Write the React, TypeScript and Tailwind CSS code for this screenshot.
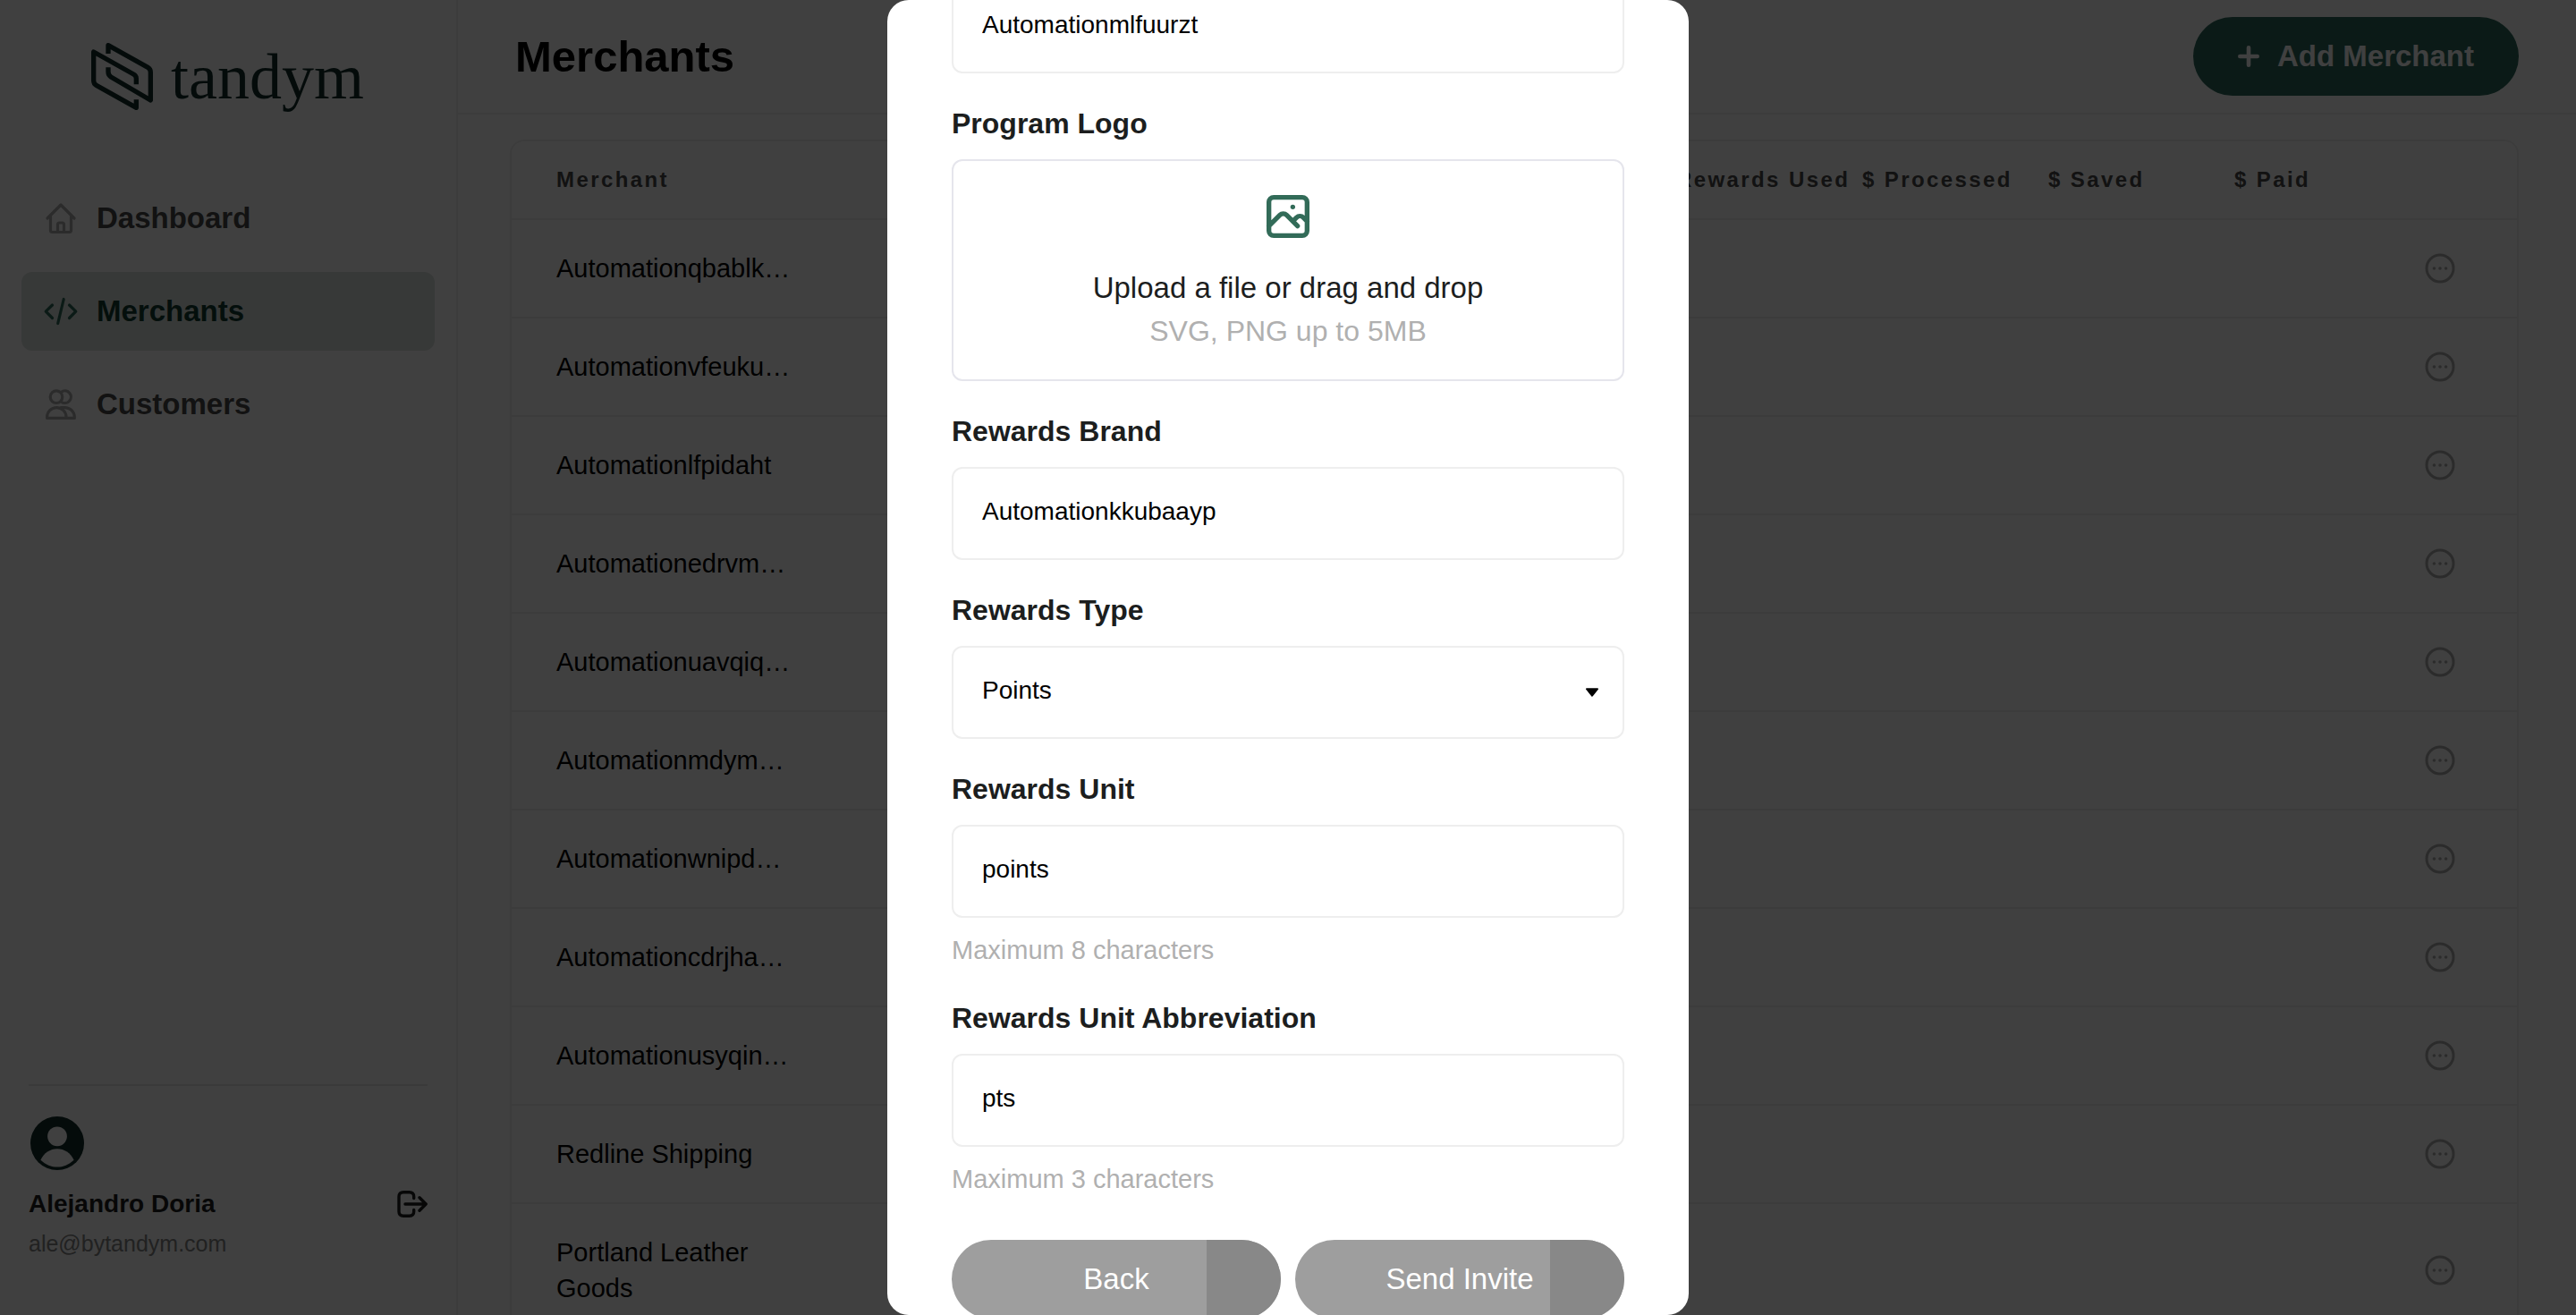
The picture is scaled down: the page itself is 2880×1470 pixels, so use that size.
import { useLayoutEffect, useRef } from "react";
import type { ReactNode } from "react";

const merchants = [
  "Automationqbablk…",
  "Automationvfeuku…",
  "Automationlfpidaht",
  "Automationedrvm…",
  "Automationuavqiq…",
  "Automationmdym…",
  "Automationwnipd…",
  "Automationcdrjha…",
  "Automationusyqin…",
  "Redline Shipping",
  "Portland Leather Goods",
];

function LineIcon({ children, className }: { children: ReactNode; className: string }) {
  return (
    <svg
      viewBox="0 0 40 40"
      className={className}
      fill="none"
      stroke="currentColor"
      strokeWidth={3.2}
      strokeLinecap="round"
      strokeLinejoin="round"
      aria-hidden="true"
    >
      {children}
    </svg>
  );
}

function Logo() {
  return (
    <div className="flex h-20 items-start gap-5 pl-[102px] text-[#112d2a]">
      <svg
        viewBox="0 0 207 225"
        className="h-[75px] w-[69px]"
        fill="none"
        stroke="currentColor"
        strokeWidth={16}
        strokeLinejoin="round"
        aria-hidden="true"
      >
        <path d="M151 139V119Q151 110 142 105L8 30V126Q8 137 17 142L151 217V190" />
        <path d="M57 82V97Q57 108 66 114L199 192V98Q199 87 190 82L57 8V36" />
      </svg>
      <span className="font-['Liberation_Serif',serif] text-[72px] leading-[76px]">tandym</span>
    </div>
  );
}

function NavItem({ label, active, children }: { label: string; active?: boolean; children: ReactNode }) {
  return (
    <a
      href="#"
      className={
        active
          ? "flex h-22 items-center gap-5 rounded-xl bg-[#dae1de] px-6 text-[33px] font-bold text-[#103c31]"
          : "flex h-22 items-center gap-5 rounded-xl px-6 text-[33px] font-bold text-[#484848]"
      }
    >
      <LineIcon className={active ? "size-10 text-[#2d6a58]" : "size-10 text-[#acacac]"}>{children}</LineIcon>
      {label}
    </a>
  );
}

function Sidebar() {
  return (
    <aside className="flex w-128 shrink-0 flex-col justify-between border-r-2 border-[#f0f0f0]">
      <div className="pt-12">
        <Logo />
        <nav className="mt-[72px] flex flex-col gap-4 px-6">
          <NavItem label="Dashboard">
            <path d="M5 20L20 5L35 20" />
            <path d="M8.5 17V33.5Q8.5 35.5 10.5 35.5H29.5Q31.5 35.5 31.5 33.5V17" />
            <path d="M16.5 35V27Q16.5 25 18.5 25H21.5Q23.5 25 23.5 27V35" />
          </NavItem>
          <NavItem label="Merchants" active>
            <path d="M10.5 13L3.2 20.2L10.5 27.5" />
            <path d="M23.2 6.5L16.7 33.5" />
            <path d="M29.5 13L36.8 20.2L29.5 27.5" />
          </NavItem>
          <NavItem label="Customers">
            <circle cx="15" cy="11.7" r="6.8" />
            <path d="M20.5 6.2A6.8 6.8 0 1 1 20.5 17.2" />
            <path d="M4.6 35.4V34.3A10.7 10.7 0 0 1 26 34.3V35.4Z" />
            <path d="M20 23.6H24.5A10.8 10.8 0 0 1 35.3 34.3V35.4H26" />
          </NavItem>
        </nav>
      </div>
      <div className="mx-8 border-t-2 border-[#e8e8e8] pt-8 pb-16">
        <svg viewBox="0 0 64 64" className="size-16" aria-hidden="true">
          <circle cx="32" cy="32" r="30" fill="#112d2a" />
          <circle cx="32" cy="24.3" r="10.9" fill="#fff" />
          <path
            fill="#fff"
            d="M13.4 50.7C17 43 24 38.3 32 38.3S47 43 50.6 50.7C45 56 38.5 58.6 32 58.6S19 56 13.4 50.7Z"
          />
        </svg>
        <div className="mt-4 flex h-10 items-center justify-between">
          <span className="text-[28px] font-bold text-[#1c1e1e]">Alejandro Doria</span>
          <button type="button" aria-label="Log out" className="text-[#1c1e1e]">
            <svg
              viewBox="0 0 36 36"
              className="size-9"
              fill="none"
              stroke="currentColor"
              strokeWidth={3.4}
              strokeLinecap="round"
              strokeLinejoin="round"
            >
              <path d="M20.7 11.5V9.7Q20.7 4.7 15.7 4.7H9Q4 4.7 4 9.7V26.3Q4 31.3 9 31.3H15.7Q20.7 31.3 20.7 26.3V24.5" />
              <path d="M11 18H34M27 10.8L34.2 18L27 25.2" />
            </svg>
          </button>
        </div>
        <p className="mt-2 text-[25px] leading-8 text-[#858585]">ale@bytandym.com</p>
      </div>
    </aside>
  );
}

function MerchantTable() {
  return (
    <div className="overflow-hidden rounded-2xl border-2 border-[#f0f0f0]">
      <table className="w-full table-fixed border-separate border-spacing-0 text-left">
        <thead>
          <tr className="h-22 text-2xl tracking-widest text-[#484848] *:border-b-2 *:border-[#f0f0f0] *:font-bold">
            <th className="pl-[50px]">Merchant</th>
            <th className="w-52 whitespace-nowrap">Rewards Used</th>
            <th className="w-52 whitespace-nowrap">$ Processed</th>
            <th className="w-52 whitespace-nowrap">$ Saved</th>
            <th className="w-[316px] whitespace-nowrap">$ Paid</th>
          </tr>
        </thead>
        <tbody>
          {merchants.map((name) => (
            <tr key={name} className="*:border-b-2 *:border-[#f0f0f0]">
              <td colSpan={4} className="py-[34px] pl-[50px] text-[29px] leading-10 text-black">
                <div className="max-w-72">{name}</div>
              </td>
              <td className="pr-[66px]">
                <button type="button" aria-label={`Actions for ${name}`} className="ml-auto block text-[#acacac]">
                  <svg viewBox="0 0 40 40" className="size-10" fill="currentColor">
                    <circle cx="20" cy="20" r="15" fill="none" stroke="currentColor" strokeWidth={3} />
                    <circle cx="13.4" cy="20" r="1.8" />
                    <circle cx="20" cy="20" r="1.8" />
                    <circle cx="26.6" cy="20" r="1.8" />
                  </svg>
                </button>
              </td>
            </tr>
          ))}
        </tbody>
      </table>
    </div>
  );
}

const inputClass =
  "h-26 w-full appearance-none rounded-xl border-2 border-[#eeeeee] bg-white px-8 pb-1 text-[28px] text-black";

function Field({ id, label, hint, children }: { id: string; label: string; hint?: string; children: ReactNode }) {
  return (
    <div className="flex flex-col">
      <label htmlFor={id} className="mb-5 text-[32px] leading-10 font-bold text-[#1c1e1e]">
        {label}
      </label>
      {children}
      {hint && <p className="mt-4 text-[29px] leading-10 text-[#b0b0b0]">{hint}</p>}
    </div>
  );
}

function ProgressButton({ label }: { label: string }) {
  return (
    <button
      type="button"
      className="relative h-22 flex-1 overflow-hidden rounded-full bg-[#9e9e9e] text-[33px] text-white"
    >
      <span className="absolute inset-y-0 right-0 w-[83px] bg-[#888888]" />
      {label}
    </button>
  );
}

function InviteDialog() {
  const scroller = useRef<HTMLDivElement>(null);

  // The form opens scrolled past the top of the program name field.
  useLayoutEffect(() => {
    if (scroller.current) scroller.current.scrollTop = 58;
  }, []);

  return (
    <div className="fixed inset-0 flex justify-center bg-black/75">
      <div
        ref={scroller}
        role="dialog"
        aria-modal="true"
        className="h-full w-4xl overflow-y-auto rounded-3xl bg-white [scrollbar-width:none]"
      >
        <form className="flex flex-col gap-9 px-18 pt-9 pb-18">
          <input aria-label="Program Name" className={inputClass} defaultValue="Automationmlfuurzt" />
          <Field id="program-logo" label="Program Logo">
            <label
              htmlFor="program-logo"
              className="relative flex flex-col items-center rounded-xl border-2 border-[#e5e5ec] py-[30px] text-[33px] leading-12"
            >
              <svg
                viewBox="0 0 24 24"
                className="mb-6 size-16 text-[#326b58]"
                fill="none"
                stroke="currentColor"
                strokeWidth={2}
                strokeLinecap="round"
                strokeLinejoin="round"
                aria-hidden="true"
              >
                <path d="M4 16l4.586-4.586a2 2 0 012.828 0L16 16m-2-2l1.586-1.586a2 2 0 012.828 0L20 14m-6-6h.01M6 20h12a2 2 0 002-2V6a2 2 0 00-2-2H6a2 2 0 00-2 2v12a2 2 0 002 2z" />
              </svg>
              <span className="text-[#1c1e1e]">Upload a file or drag and drop</span>
              <span className="text-[32px] text-[#b0b0b0]">SVG, PNG up to 5MB</span>
              <input id="program-logo" type="file" className="sr-only" />
            </label>
          </Field>
          <Field id="rewards-brand" label="Rewards Brand">
            <input id="rewards-brand" className={inputClass} defaultValue="Automationkkubaayp" />
          </Field>
          <Field id="rewards-type" label="Rewards Type">
            <div className="relative">
              <select id="rewards-type" className={inputClass}>
                <option>Points</option>
              </select>
              <svg
                viewBox="0 0 16 10"
                className="pointer-events-none absolute inset-y-0 right-7 my-auto h-2.5 w-4"
                aria-hidden="true"
              >
                <path
                  d="M2 1.2H14L8 8.6Z"
                  fill="#000"
                  stroke="#000"
                  strokeWidth={2}
                  strokeLinejoin="round"
                />
              </svg>
            </div>
          </Field>
          <Field id="rewards-unit" label="Rewards Unit" hint="Maximum 8 characters">
            <input id="rewards-unit" maxLength={8} className={inputClass} defaultValue="points" />
          </Field>
          <Field id="rewards-abbreviation" label="Rewards Unit Abbreviation" hint="Maximum 3 characters">
            <input id="rewards-abbreviation" maxLength={3} className={inputClass} defaultValue="pts" />
          </Field>
          <div className="mt-3 flex gap-4">
            <ProgressButton label="Back" />
            <ProgressButton label="Send Invite" />
          </div>
        </form>
      </div>
    </div>
  );
}

export default function App() {
  return (
    <div className="flex h-screen overflow-hidden bg-white font-['Liberation_Sans',Arial,sans-serif]">
      <Sidebar />
      <main className="min-w-0 flex-1">
        <header className="flex h-32 items-center justify-between border-b-2 border-[#f0f0f0] px-16">
          <h1 className="text-[49px] leading-none font-bold text-black">Merchants</h1>
          <button
            type="button"
            className="flex h-22 w-[364px] items-center justify-center gap-5 rounded-full bg-[#2d6a5c] text-[33px] font-bold text-white"
          >
            <svg
              viewBox="0 0 24 24"
              className="size-6"
              fill="none"
              stroke="currentColor"
              strokeWidth={4.6}
              strokeLinecap="round"
              aria-hidden="true"
            >
              <path d="M12 2.3V21.7M2.3 12H21.7" />
            </svg>
            Add Merchant
          </button>
        </header>
        <div className="pt-7 pr-16 pl-[58px]">
          <MerchantTable />
        </div>
      </main>
      <InviteDialog />
    </div>
  );
}
